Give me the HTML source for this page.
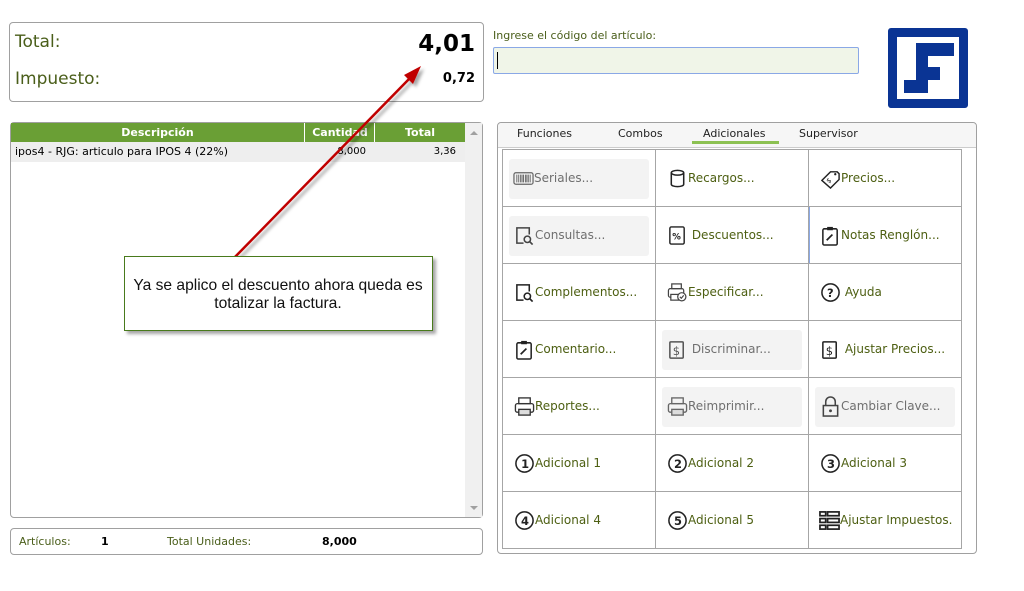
<!DOCTYPE html>
<html><head><meta charset="utf-8"><style>
*{box-sizing:border-box;margin:0;padding:0}
body{width:1024px;height:591px;background:#fff;position:relative;font-family:"DejaVu Sans","Liberation Sans",sans-serif;overflow:hidden}
.abs{position:absolute}
.box{position:absolute;border:1px solid #a0a0a0;border-radius:4px;background:#fff}
.lbl{color:#4a5e1a}
.cell{position:absolute;width:153px;height:57px;border-right:1px solid #a6a6a6;border-bottom:1px solid #a6a6a6;font-size:12px;color:#4d5f12}
.cell .bg{position:absolute;left:6px;top:9px;width:140px;height:40px;background:#f3f3f3;border-radius:3px}
.cell .in{position:absolute;left:11px;top:0;height:56px;display:flex;align-items:center;white-space:nowrap}
.cell svg{width:21px;height:21px;flex:none;margin-right:0}
.dis{color:#6f6f6f}
</style></head><body>

<div class="box" style="left:9px;top:22px;width:475px;height:80px"></div>
<div class="abs lbl" style="left:15px;top:32px;font-size:17px">Total:</div>
<div class="abs" style="right:549px;top:31px;font-size:23px;font-weight:bold">4,01</div>
<div class="abs lbl" style="left:15px;top:69px;font-size:17px">Impuesto:</div>
<div class="abs" style="right:549px;top:71px;font-size:13px;font-weight:bold">0,72</div>

<div class="box" style="left:10px;top:122px;width:473px;height:396px"></div>
<div class="abs" style="left:11px;top:123px;width:454px;height:19px;background:#6a9f35;color:#fff;font-size:11px;font-weight:bold">
 <div class="abs" style="left:0;width:293px;top:3px;text-align:center">Descripción</div>
 <div class="abs" style="left:293px;width:1px;top:0;height:19px;background:#fff"></div>
 <div class="abs" style="left:294px;width:70px;top:3px;text-align:center">Cantidad</div>
 <div class="abs" style="left:363px;width:1px;top:0;height:19px;background:#fff"></div>
 <div class="abs" style="left:364px;width:90px;top:3px;text-align:center">Total</div>
</div>
<div class="abs" style="left:465px;top:123px;width:17px;height:394px;background:#f0f0f0"></div>
<div class="abs" style="left:470px;top:131px;border:4px solid transparent;border-bottom:4px solid #a0a0a0;border-top:0"></div>
<div class="abs" style="left:470px;top:506px;border:4px solid transparent;border-top:4px solid #a0a0a0;border-bottom:0"></div>
<div class="abs" style="left:11px;top:142px;width:454px;height:20px;background:#eee;font-size:11px">
 <div class="abs" style="left:4px;top:3px">ipos4 - RJG: articulo para IPOS 4 (22%)</div>
 <div class="abs" style="right:99px;top:4px;font-size:10px">8,000</div>
 <div class="abs" style="right:9px;top:4px;font-size:10px">3,36</div>
</div>

<div class="box" style="left:10px;top:528px;width:473px;height:27px"></div>
<div class="abs lbl" style="left:19px;top:535px;font-size:11px">Artículos:</div>
<div class="abs" style="left:101px;top:535px;font-size:11px;font-weight:bold">1</div>
<div class="abs lbl" style="left:167px;top:535px;font-size:11px">Total Unidades:</div>
<div class="abs" style="left:322px;top:535px;font-size:11px;font-weight:bold">8,000</div>

<div class="abs lbl" style="left:493px;top:29px;font-size:11px">Ingrese el código del artículo:</div>
<div class="abs" style="left:493px;top:47px;width:366px;height:27px;background:#f0f5e8;border:1px solid #8aa8e6;border-radius:2px"><div class="abs" style="left:3px;top:4px;width:1px;height:17px;background:#000"></div></div>

<svg class="abs" style="left:888px;top:28px" width="80" height="80" viewBox="0 0 80 80">
<rect x="0" y="0" width="80" height="80" rx="3" fill="#0a3494"/>
<rect x="9" y="9" width="62" height="62" fill="#fff"/>
<rect x="28" y="15" width="38" height="13" fill="#0a3494"/>
<rect x="28" y="15" width="12" height="37" fill="#0a3494"/>
<rect x="28" y="39" width="24" height="13" fill="#0a3494"/>
<rect x="16" y="52" width="24" height="13" fill="#0a3494"/>
</svg>

<div class="box" style="left:497px;top:122px;width:480px;height:432px"></div>
<div class="abs" style="left:498px;top:123px;width:478px;height:25px;background:#f6f6f6;border-bottom:1px solid #ccc;border-radius:4px 4px 0 0;font-size:11px;color:#222">
 <div class="abs" style="left:19px;top:4px">Funciones</div>
 <div class="abs" style="left:120px;top:4px">Combos</div>
 <div class="abs" style="left:205px;top:4px">Adicionales</div>
 <div class="abs" style="left:194px;top:18px;width:87px;height:3px;background:#8cc152"></div>
 <div class="abs" style="left:301px;top:4px">Supervisor</div>
</div>

<div class="abs" style="left:502px;top:149px;width:460px;height:400px;border-left:1px solid #a6a6a6;border-top:1px solid #a6a6a6">
<div class="cell" style="left:0;top:0"><div class="bg"></div><div class="in dis" style="left:10px"><svg viewBox="0 0 22 22"><rect x="1" y="5" width="20" height="12" rx="2" fill="none" stroke="#666" stroke-width="1.3"/><path d="M4 7v8M6 7v8M8 7v8M9.5 7v8M11 7v8M13 7v8M14.5 7v8M16 7v8M18 7v8" stroke="#666" stroke-width="1"/></svg>Seriales...</div></div>
<div class="cell" style="left:153px;top:0"><div class="in"><svg viewBox="0 0 22 22"><ellipse cx="11" cy="5" rx="6.5" ry="2.5" fill="none" stroke="#222" stroke-width="1.6"/><path d="M4.5 5v12c0 1.5 2.9 2.5 6.5 2.5s6.5-1 6.5-2.5V5" fill="none" stroke="#222" stroke-width="1.6"/></svg>Recargos...</div></div>
<div class="cell" style="left:306px;top:0"><div class="in"><svg viewBox="0 0 22 22"><path d="M2 13l9-9h7l2 2v6l-9 9z" fill="none" stroke="#222" stroke-width="1.5"/><circle cx="16" cy="6.5" r="1.2" fill="#222"/><text x="7" y="15" font-size="7" fill="#222" transform="rotate(-40 10 13)">$</text></svg>Precios...</div></div>

<div class="cell" style="left:0;top:57px"><div class="bg"></div><div class="in dis"><svg viewBox="0 0 22 22"><path d="M10 19H3V3h13v7" fill="none" stroke="#444" stroke-width="1.6"/><circle cx="14" cy="15" r="3.3" fill="none" stroke="#444" stroke-width="1.6"/><path d="M16.5 17.5l3 3" stroke="#444" stroke-width="1.8"/></svg>Consultas...</div></div>
<div class="cell" style="left:153px;top:57px"><div class="in"><svg viewBox="0 0 22 22"><rect x="3" y="2" width="15" height="18" rx="1.5" fill="none" stroke="#222" stroke-width="1.5"/><text x="5.5" y="15" font-size="9" font-weight="bold" fill="#222">%</text></svg>&nbsp;Descuentos...</div></div>
<div class="cell" style="left:306px;top:57px;box-shadow:inset 1px 0 0 #8aa8e6"><div class="in"><svg viewBox="0 0 22 22"><rect x="3" y="4" width="15" height="17" rx="1.5" fill="none" stroke="#222" stroke-width="1.6"/><rect x="7.5" y="2" width="6" height="3.5" fill="#222"/><path d="M7 16l6-6" stroke="#222" stroke-width="1.8"/></svg>Notas Renglón...</div></div>

<div class="cell" style="left:0;top:114px"><div class="in"><svg viewBox="0 0 22 22"><path d="M10 19H3V3h13v7" fill="none" stroke="#222" stroke-width="1.6"/><circle cx="14" cy="15" r="3.3" fill="none" stroke="#222" stroke-width="1.6"/><path d="M16.5 17.5l3 3" stroke="#222" stroke-width="1.8"/></svg>Complementos...</div></div>
<div class="cell" style="left:153px;top:114px"><div class="in"><svg viewBox="0 0 22 22"><rect x="5" y="2" width="10" height="5" fill="none" stroke="#444" stroke-width="1.3"/><rect x="1.5" y="7" width="16" height="9" rx="2" fill="none" stroke="#444" stroke-width="1.3"/><rect x="4" y="13" width="8" height="6" fill="#fff" stroke="#444" stroke-width="1.3"/><circle cx="15.5" cy="15.5" r="4.3" fill="#fff" stroke="#444" stroke-width="1.3"/><path d="M13.5 15.5l1.5 1.5 2.5-3" fill="none" stroke="#444" stroke-width="1.2"/></svg>Especificar...</div></div>
<div class="cell" style="left:306px;top:114px"><div class="in"><svg viewBox="0 0 22 22"><circle cx="11" cy="11" r="9" fill="none" stroke="#222" stroke-width="1.6"/><text x="7.3" y="15.5" font-size="12" font-weight="bold" fill="#222">?</text></svg>&nbsp;Ayuda</div></div>

<div class="cell" style="left:0;top:171px"><div class="in"><svg viewBox="0 0 22 22"><rect x="3" y="4" width="15" height="17" rx="1.5" fill="none" stroke="#222" stroke-width="1.6"/><rect x="7.5" y="2" width="6" height="3.5" fill="#222"/><path d="M7 16l6-6" stroke="#222" stroke-width="1.8"/></svg>Comentario...</div></div>
<div class="cell" style="left:153px;top:171px"><div class="bg"></div><div class="in dis"><svg viewBox="0 0 22 22"><rect x="3" y="3" width="14" height="17" rx="1" fill="none" stroke="#555" stroke-width="1.6"/><text x="6" y="16.5" font-size="12" fill="#555">$</text></svg>&nbsp;Discriminar...</div></div>
<div class="cell" style="left:306px;top:171px"><div class="in"><svg viewBox="0 0 22 22"><rect x="3" y="3" width="14" height="17" rx="1" fill="none" stroke="#222" stroke-width="1.6"/><text x="6" y="16.5" font-size="12" fill="#222">$</text></svg>&nbsp;Ajustar Precios...</div></div>

<div class="cell" style="left:0;top:228px"><div class="in"><svg viewBox="0 0 22 22"><rect x="5" y="2" width="12" height="6" fill="none" stroke="#333" stroke-width="1.4"/><rect x="1.5" y="8" width="19" height="9" rx="2" fill="none" stroke="#333" stroke-width="1.4"/><rect x="5" y="14" width="12" height="6" fill="#ddd" stroke="#333" stroke-width="1.4"/></svg>Reportes...</div></div>
<div class="cell" style="left:153px;top:228px"><div class="bg"></div><div class="in dis"><svg viewBox="0 0 22 22"><rect x="5" y="2" width="12" height="6" fill="none" stroke="#666" stroke-width="1.4"/><rect x="1.5" y="8" width="19" height="9" rx="2" fill="none" stroke="#666" stroke-width="1.4"/><rect x="5" y="14" width="12" height="6" fill="#ddd" stroke="#666" stroke-width="1.4"/></svg>Reimprimir...</div></div>
<div class="cell" style="left:306px;top:228px"><div class="bg"></div><div class="in dis"><svg viewBox="0 0 22 22"><path d="M6 10V6a5 5 0 0 1 10 0v4" fill="none" stroke="#444" stroke-width="1.6"/><rect x="3.5" y="10" width="15" height="11" fill="none" stroke="#444" stroke-width="1.6"/><circle cx="11" cy="15.5" r="1.5" fill="#444"/></svg>Cambiar Clave...</div></div>

<div class="cell" style="left:0;top:285px"><div class="in"><svg viewBox="0 0 22 22"><circle cx="11" cy="11" r="9" fill="none" stroke="#222" stroke-width="1.6"/><text x="7.5" y="15.5" font-size="12" font-weight="bold" fill="#222">1</text></svg>Adicional 1</div></div>
<div class="cell" style="left:153px;top:285px"><div class="in"><svg viewBox="0 0 22 22"><circle cx="11" cy="11" r="9" fill="none" stroke="#222" stroke-width="1.6"/><text x="7.3" y="15.5" font-size="12" font-weight="bold" fill="#222">2</text></svg>Adicional 2</div></div>
<div class="cell" style="left:306px;top:285px"><div class="in"><svg viewBox="0 0 22 22"><circle cx="11" cy="11" r="9" fill="none" stroke="#222" stroke-width="1.6"/><text x="7.3" y="15.5" font-size="12" font-weight="bold" fill="#222">3</text></svg>Adicional 3</div></div>

<div class="cell" style="left:0;top:342px"><div class="in"><svg viewBox="0 0 22 22"><circle cx="11" cy="11" r="9" fill="none" stroke="#222" stroke-width="1.6"/><text x="7.3" y="15.5" font-size="12" font-weight="bold" fill="#222">4</text></svg>Adicional 4</div></div>
<div class="cell" style="left:153px;top:342px"><div class="in"><svg viewBox="0 0 22 22"><circle cx="11" cy="11" r="9" fill="none" stroke="#222" stroke-width="1.6"/><text x="7.3" y="15.5" font-size="12" font-weight="bold" fill="#222">5</text></svg>Adicional 5</div></div>
<div class="cell" style="left:306px;top:342px"><div class="in" style="left:10px"><svg viewBox="0 0 22 22"><g fill="none" stroke="#222" stroke-width="1.8"><rect x="1" y="2" width="6" height="4"/><rect x="9" y="2" width="12" height="4"/><rect x="1" y="9" width="6" height="4"/><rect x="9" y="9" width="12" height="4"/><rect x="1" y="16" width="6" height="4"/><rect x="9" y="16" width="12" height="4"/></g></svg>Ajustar Impuestos.</div></div>
</div>

<svg class="abs" style="left:0;top:0" width="1024" height="591">
<defs><filter id="sh"><feDropShadow dx="3" dy="3" stdDeviation="1.5" flood-color="#000" flood-opacity="0.35"/></filter></defs>
<g filter="url(#sh)">
<line x1="234" y1="258" x2="410" y2="78" stroke="#c00000" stroke-width="2.5"/>
<polygon points="421,66 404,75 413,84" fill="#c00000"/>
<rect x="124.5" y="256.5" width="308" height="74" fill="#fff" stroke="#4a7a1a" stroke-width="1"/>
</g>
<text x="278" y="290" font-family="Liberation Sans" font-size="15.6" text-anchor="middle" fill="#111">Ya se aplico el descuento ahora queda es</text>
<text x="278" y="308" font-family="Liberation Sans" font-size="15.6" text-anchor="middle" fill="#111">totalizar la factura.</text>
</svg>
</body></html>
